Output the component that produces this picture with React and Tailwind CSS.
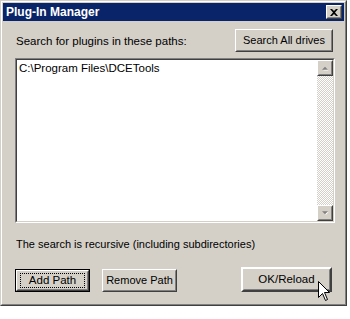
const raised =
  'border border-t-white border-l-white border-r-[#404040] border-b-[#404040]';
const raisedInner =
  'border border-t-[#d4d0c8] border-l-[#d4d0c8] border-r-[#808080] border-b-[#808080]';

const Button = ({ children, className = '' }) => (
  <div className={`${raised} bg-[#d4d0c8] ${className}`}>
    <div className={`${raisedInner} w-full h-full flex items-center justify-center`}>
      {children}
    </div>
  </div>
);

const Arrow = ({ up }) => (
  <svg width="14" height="14" viewBox="0 0 14 14">
    {up ? (
      <>
        <path d="M4 9 L7 6 L10 9 Z" fill="#ffffff" transform="translate(1 1)" />
        <path d="M3.5 9 L7 5.5 L10.5 9 Z" fill="#808080" />
      </>
    ) : (
      <>
        <path d="M4 5 L7 8 L10 5 Z" fill="#ffffff" transform="translate(1 1)" />
        <path d="M3.5 5 L7 8.5 L10.5 5 Z" fill="#808080" />
      </>
    )}
  </svg>
);

const Cursor = () => (
  <svg
    width="13"
    height="21"
    viewBox="0 0 13 21"
    className="absolute left-[318px] top-[281px]"
  >
    <path
      d="M0.5 0.5 L0.5 16.5 L4.5 12.5 L7.5 19.5 L9.5 18.5 L6.5 11.5 L11.5 11.5 Z"
      fill="#ffffff"
      stroke="#000000"
      strokeWidth="1"
    />
  </svg>
);

export default function App() {
  return (
    <div
      className="relative w-[350px] h-[319px] bg-white text-[11px] text-black"
      style={{ fontFamily: '"Liberation Sans", Arial, sans-serif' }}
    >
      {/* Window frame */}
      <div className="w-[347px] h-[306px] border border-t-[#d4d0c8] border-l-[#d4d0c8] border-r-[#404040] border-b-[#404040] bg-[#d4d0c8]">
        <div className="w-full h-full border border-t-white border-l-white border-r-[#808080] border-b-[#808080] p-px flex flex-col">
          {/* Title bar */}
          <div className="h-[18px] bg-[#0a246a] flex items-center justify-between pl-[3px] pr-[2px]">
            <span className="text-white font-bold text-[12px] leading-none">Plug-In Manager</span>
            <div className={`${raised} w-[16px] h-[14px] bg-[#d4d0c8]`}>
              <div className={`${raisedInner} w-full h-full flex items-center justify-center`}>
                <svg width="8" height="7" viewBox="0 0 8 7">
                  <path d="M0 0 L2 0 L4 2 L6 0 L8 0 L5 3.5 L8 7 L6 7 L4 5 L2 7 L0 7 L3 3.5 Z" fill="#000" />
                </svg>
              </div>
            </div>
          </div>

          {/* Top row */}
          <div className="mt-[8px] flex items-center justify-between pl-[13px] pr-[11px]">
            <span className="leading-[13px] mt-[2px] text-[11.5px]">Search for plugins in these paths:</span>
            <Button className="w-[98px] h-[23px]">Search All drives</Button>
          </div>

          {/* Path list */}
          <div className="mt-[6px] ml-[12px] w-[320px] h-[165px] border border-t-[#808080] border-l-[#808080] border-r-white border-b-white">
            <div className="w-full h-full border border-t-[#404040] border-l-[#404040] border-r-[#d4d0c8] border-b-[#d4d0c8] bg-white flex">
              <div className="flex-1 pl-[2px] pt-[2px] leading-[13px] text-[11.5px]">C:\Program Files\DCETools</div>
              <div className="w-[16px] flex flex-col">
                <Button className="w-[16px] h-[16px]">
                  <Arrow up />
                </Button>
                <div className="flex-1 bg-[repeating-conic-gradient(#ffffff_0%_25%,#d4d0c8_0%_50%)] bg-[length:2px_2px]" />
                <Button className="w-[16px] h-[16px]">
                  <Arrow />
                </Button>
              </div>
            </div>
          </div>

          <div className="mt-[15px] ml-[13px] leading-[13px]">
            The search is recursive (including subdirectories)
          </div>

          {/* Bottom buttons */}
          <div className="mt-[16px] ml-[12px] flex items-start">
            <div className="w-[75px] h-[23px] border border-black mt-[2px]">
              <Button className="w-full h-full">
                <span className="w-[65px] h-[15px] border border-dotted border-black flex items-center justify-center text-[11.5px]">
                  Add Path
                </span>
              </Button>
            </div>
            <Button className="w-[75px] h-[23px] ml-[12px] mt-[2px]">Remove Path</Button>
            <div className={`${raised} w-[91px] h-[25px] ml-[64px] bg-[#d4d0c8]`}>
              <Button className="w-full h-full text-[11.5px]">OK/Reload</Button>
            </div>
          </div>
        </div>
      </div>
      <Cursor />
    </div>
  );
}
